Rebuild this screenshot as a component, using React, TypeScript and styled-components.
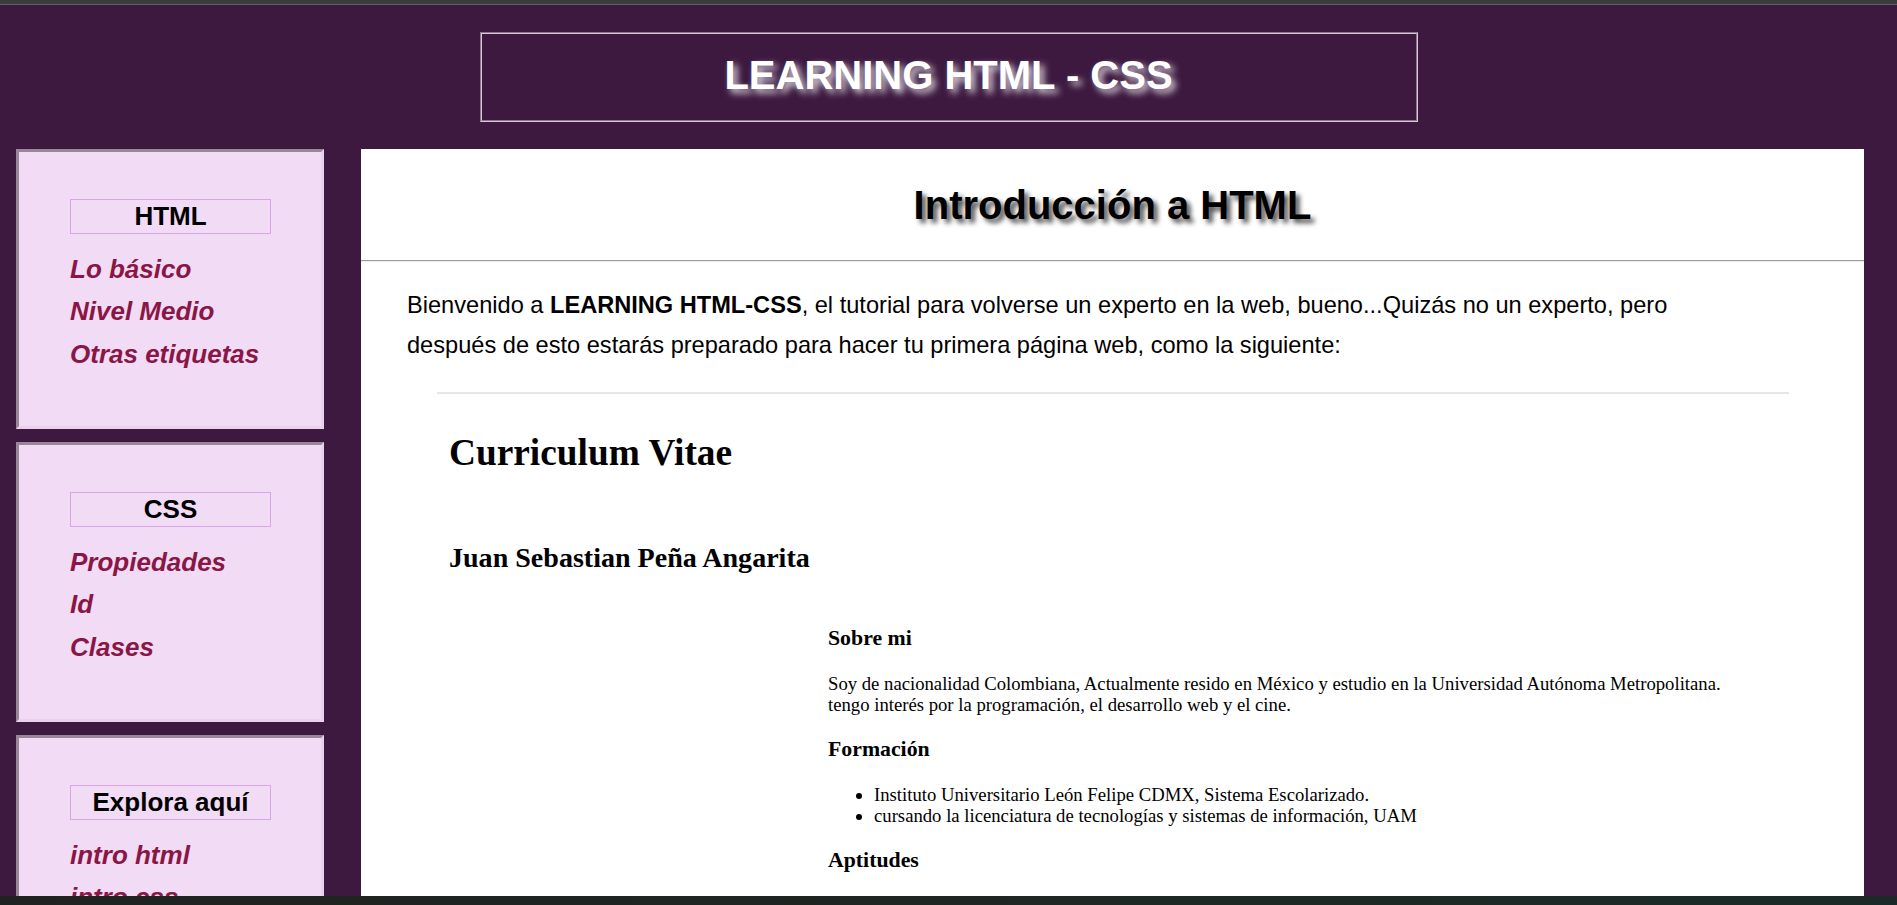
import React from "react";
import styled, { createGlobalStyle } from "styled-components";

const GlobalStyle = createGlobalStyle`
  html, body {
    margin: 0;
    padding: 0;
  }
  body {
    background: #3d1940;
    font-family: "Liberation Sans", Arial, sans-serif;
    overflow: hidden;
  }
  *, *::before, *::after {
    box-sizing: border-box;
  }
`;

const Page = styled.div`
  height: 905px;
  display: flex;
  flex-direction: column;
  overflow: hidden;
  background: #3d1940;
`;

const BrowserStrip = styled.div`
  flex: none;
  height: 5px;
  background: #3a3b3c;
  border-bottom: 1px solid #616265;
`;

const TaskbarStrip = styled.div`
  flex: none;
  height: 9px;
  background: linear-gradient(90deg, #1f2220 0%, #1d2723 60%, #1b2a27 100%);
`;

const Header = styled.header`
  flex: none;
  display: flex;
  justify-content: center;
  padding: 27px 0;
`;

const HeaderBox = styled.div`
  width: 938px;
  height: 90px;
  border: 2px groove #dcc4dc;
  padding: 18px 0 22px;
  text-align: center;
`;

const SiteTitle = styled.h1`
  margin: 0;
  font-family: "Liberation Sans", Arial, sans-serif;
  font-size: 40px;
  line-height: 46px;
  font-weight: 700;
  color: #ffffff;
  text-shadow: 4px 4px 7px rgba(255, 255, 255, 0.85);
`;

const Layout = styled.div`
  flex: 1;
  min-height: 0;
  overflow: hidden;
  display: grid;
  grid-template-columns: 308px 1503px;
  column-gap: 37px;
  padding: 0 33px 0 16px;
`;

const Sidebar = styled.aside`
  display: flex;
  flex-direction: column;
  gap: 13px;
`;

const NavBox = styled.nav`
  flex: none;
  height: 280px;
  background: #f1dbf5;
  border: 3px inset #ead2ec;
  padding: 47px 0 0 51px;
`;

const NavTitle = styled.h3`
  margin: 0 0 14px;
  width: 201px;
  height: 35px;
  border: 1px solid #dca4e8;
  font-size: 26px;
  line-height: 33px;
  font-weight: 700;
  text-align: center;
  color: #000;
`;

const NavList = styled.ul`
  list-style: none;
  margin: 0;
  padding: 0;
`;

const NavLink = styled.a`
  display: block;
  font-size: 26px;
  line-height: 42.3px;
  font-weight: 700;
  font-style: italic;
  color: #8a1646;
  text-decoration: none;
  cursor: pointer;
`;

const Main = styled.main`
  background: #ffffff;
  display: flex;
  flex-direction: column;
`;

const TitleBar = styled.div`
  padding: 33px 0 32px;
  text-align: center;
`;

const PageTitle = styled.h2`
  margin: 0;
  font-size: 40px;
  line-height: 46px;
  font-weight: 700;
  color: #000;
  text-shadow: 4px 4px 5px rgba(0, 0, 0, 0.7);
`;

const Divider = styled.div`
  height: 2px;
  border-top: 1px solid #9c9c9c;
  border-bottom: 1px solid #ececec;
`;

const Intro = styled.p`
  margin: 23px 0 0;
  padding: 0 150px 0 46px;
  font-size: 23.6px;
  line-height: 40px;
  color: #000;
`;

const CV = styled.section`
  margin: 27px 75px 0 76px;
  border-top: 2px solid #e7e7e7;
  padding: 0 12px;
  font-family: "Liberation Serif", "Times New Roman", serif;
  color: #000;
`;

const CVTitle = styled.h1`
  margin: 38px 0 0;
  font-size: 37.35px;
  line-height: 42px;
  font-weight: 700;
`;

const CVName = styled.h2`
  margin: 68px 0 0;
  font-size: 28.05px;
  line-height: 32px;
  font-weight: 700;
`;

const CVGrid = styled.div`
  margin-top: 51.5px;
  display: grid;
  grid-template-columns: 379px 1fr;
`;

const CVAside = styled.div``;

const CVColumn = styled.div`
  display: flex;
  flex-direction: column;
  gap: 22px;
`;

const CVHeading = styled.h3`
  margin: 0;
  font-size: 21.8px;
  line-height: 25px;
  font-weight: 700;
`;

const CVText = styled.p`
  margin: 0;
  font-size: 18.7px;
  line-height: 21px;
`;

const CVList = styled.ul`
  margin: 0;
  padding-left: 46px;
  font-size: 18.7px;
  line-height: 21px;
`;

const navSections = [
  { title: "HTML", links: ["Lo básico", "Nivel Medio", "Otras etiquetas"] },
  { title: "CSS", links: ["Propiedades", "Id", "Clases"] },
  { title: "Explora aquí", links: ["intro html", "intro css"] },
];

export default function App() {
  return (
    <>
      <GlobalStyle />
      <Page>
        <BrowserStrip />
        <Header>
          <HeaderBox>
            <SiteTitle>LEARNING HTML - CSS</SiteTitle>
          </HeaderBox>
        </Header>
        <Layout>
          <Sidebar>
            {navSections.map((s) => (
              <NavBox key={s.title}>
                <NavTitle>{s.title}</NavTitle>
                <NavList>
                  {s.links.map((l) => (
                    <li key={l}>
                      <NavLink href="#">{l}</NavLink>
                    </li>
                  ))}
                </NavList>
              </NavBox>
            ))}
          </Sidebar>
          <Main>
            <TitleBar>
              <PageTitle>Introducción a HTML</PageTitle>
            </TitleBar>
            <Divider />
            <Intro>
              Bienvenido a <b>LEARNING HTML-CSS</b>, el tutorial para volverse un
              experto en la web, bueno...Quizás no un experto, pero después de esto
              estarás preparado para hacer tu primera página web, como la siguiente:
            </Intro>
            <CV>
              <CVTitle>Curriculum Vitae</CVTitle>
              <CVName>Juan Sebastian Peña Angarita</CVName>
              <CVGrid>
                <CVAside />
                <CVColumn>
                  <CVHeading>Sobre mi</CVHeading>
                  <CVText>
                    Soy de nacionalidad Colombiana, Actualmente resido en México y
                    estudio en la Universidad Autónoma Metropolitana.
                    <br />
                    tengo interés por la programación, el desarrollo web y el cine.
                  </CVText>
                  <CVHeading>Formación</CVHeading>
                  <CVList>
                    <li>Instituto Universitario León Felipe CDMX, Sistema Escolarizado.</li>
                    <li>cursando la licenciatura de tecnologías y sistemas de información, UAM</li>
                  </CVList>
                  <CVHeading>Aptitudes</CVHeading>
                </CVColumn>
              </CVGrid>
            </CV>
          </Main>
        </Layout>
        <TaskbarStrip />
      </Page>
    </>
  );
}
